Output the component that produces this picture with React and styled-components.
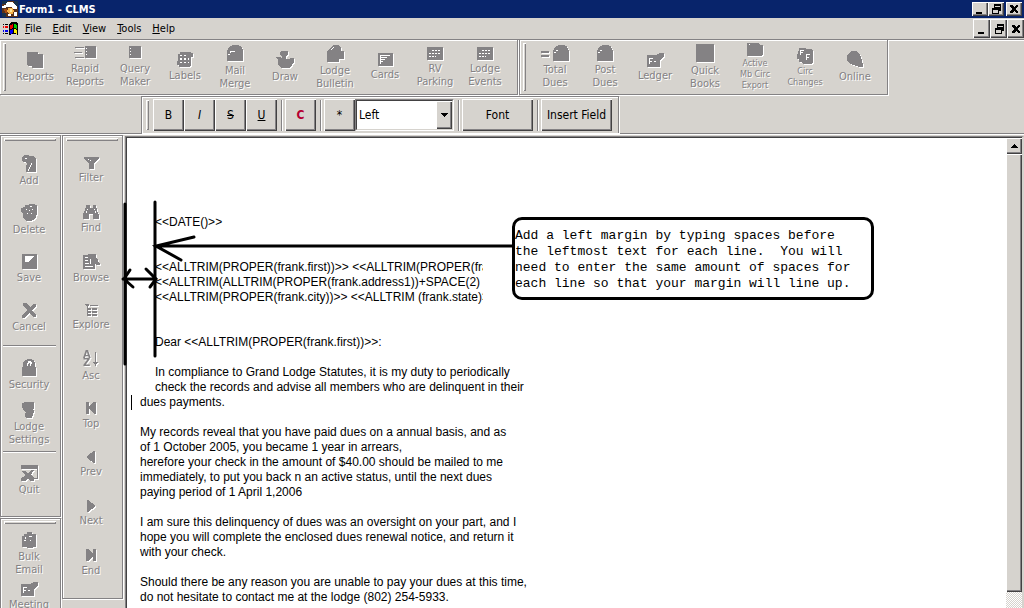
import React from 'react';
import styled, { createGlobalStyle, css } from 'styled-components';

const c = {
  face: '#d6d3ce',
  shade: '#848284',
  dark: '#424142',
  title: '#08246b',
};
const uiFont = '"DejaVu Sans Condensed", "DejaVu Sans", sans-serif';

const GlobalStyle = createGlobalStyle`
  * { box-sizing: border-box; }
  body { margin: 0; background: ${c.face}; font: 11px/13px ${uiFont}; color: #000; }
  button, select { font: inherit; color: inherit; margin: 0; padding: 0; border: 0; border-radius: 0; background: none; }
`;

const raised = css`
  background: ${c.face};
  box-shadow: inset 1px 1px #fff, inset -1px -1px ${c.dark}, inset -2px -2px ${c.shade};
`;

const Window = styled.div`
  display: flex;
  flex-direction: column;
  height: 100vh;
  overflow: hidden;
`;

const TitleBar = styled.header`
  display: flex;
  align-items: center;
  flex: none;
  height: 18px;
  padding: 0 2px;
  gap: 1px;
  background: ${c.title};
  color: #fff;
`;
const Title = styled.h1`
  flex: 1;
  margin: 0;
  padding-top: 2px;
  font: bold 11px/16px ${uiFont};
`;
const MenuBar = styled.nav`
  display: flex;
  align-items: center;
  flex: none;
  height: 21px;
  padding-left: 3px;
`;
const Menus = styled.div`
  display: flex;
  flex: 1;
  gap: 11px;
  padding-left: 6px;
`;
const MenuItem = styled.button`
  line-height: 18px;
`;
const WindowControls = styled.div`
  display: flex;
  margin-top: ${(p) => (p.$large ? '0' : '-1px')};
`;
const WindowButton = styled.button`
  ${raised}
  display: grid;
  place-items: center;
  width: ${(p) => (p.$large ? 17 : 16)}px;
  height: ${(p) => (p.$large ? 19 : 14)}px;
  margin-left: ${(p) => (p.$apart ? 2 : 0)}px;
`;

const Rebar = styled.div`
  position: relative;
  display: flex;
  flex-direction: column;
  flex: none;
  gap: 1px;
  border: solid ${c.shade};
  border-width: 1px 0;
  box-shadow: 0 1px #fff, inset 0 1px #fff;
`;
const RebarRow = styled.div`
  display: flex;
  gap: 1px;
  padding-left: ${(p) => p.$indent || 0}px;
`;
const Band = styled.div`
  display: flex;
  align-items: center;
  height: ${(p) => (p.$lower ? 37 : 55)}px;
  padding: ${(p) => (p.$lower ? '0 6px 0 4px' : '0 7px 0 3px')};
  border: solid ${c.shade};
  border-width: ${(p) => (p.$lower ? '1px 1px 0' : '0 1px 1px')};
  ${(p) => p.$flush && 'border-left: 0;'}
  box-shadow: inset 1px 1px #fff, 1px 1px #fff;
`;
const Grip = styled.div`
  flex: none;
  ${(p) =>
    p.$across
      ? 'height: 3px; margin: 0 1px 5px 3px;'
      : 'width: 3px; align-self: stretch; margin: 3px 4px 3px 0;'}
  box-shadow: inset 1px 1px #fff, inset -1px -1px ${c.shade};
`;
const Tool = styled.button`
  display: flex;
  flex-direction: column;
  align-items: center;
  justify-content: center;
  flex: none;
  gap: 2px;
  width: ${(p) => (p.$side ? 'auto' : '50px')};
  height: 49px;
  font-size: ${(p) => (p.$small ? 9 : 11)}px;
  line-height: ${(p) => (p.$small ? 11 : 13)}px;
  color: ${c.shade};
  text-shadow: 1px 1px #fff;
  white-space: pre;
`;
const Glyph = styled.svg`
  flex: none;
  overflow: visible;
  fill: ${c.shade};
  filter: drop-shadow(1px 1px 0 #fff);
  shape-rendering: crispEdges;
`;
const ToolLabel = styled.span`
  display: block;
  min-height: ${(p) => (p.$tall ? 26 : 13)}px;
  text-align: center;
`;

const FormatButton = styled.button`
  ${raised}
  width: ${(p) => p.$width || 31}px;
  height: 32px;
  font-size: 12px;
  color: ${(p) => p.$color || '#000'};
  font-weight: ${(p) => (p.$bold ? 'bold' : 'normal')};
  font-style: ${(p) => (p.$italic ? 'italic' : 'normal')};
  text-decoration: ${(p) => p.$line || 'none'};
`;
const Divider = styled.div`
  width: 2px;
  height: 31px;
  margin: 0 2px 0 4px;
  border-left: 1px solid ${c.shade};
  border-right: 1px solid #fff;
`;
const SelectFrame = styled.label`
  position: relative;
  display: block;
  width: 99px;
  height: 32px;
  border: 1px solid;
  border-color: ${c.shade} #fff #fff ${c.shade};
`;
const Select = styled.select`
  appearance: none;
  width: 100%;
  height: 100%;
  padding-left: 2px;
  font-size: 12px;
  background: #fff;
  border: 1px solid;
  border-color: ${c.dark} ${c.face} ${c.face} ${c.dark};
`;
const SelectArrow = styled.span`
  ${raised}
  position: absolute;
  top: 1px;
  right: 1px;
  bottom: 1px;
  width: 16px;
  display: grid;
  place-items: center;
  pointer-events: none;
`;

const Workspace = styled.div`
  display: flex;
  flex: 1;
  min-height: 0;
  padding-top: 1px;
`;
const SideColumn = styled.aside`
  display: flex;
  flex-direction: column;
  flex: none;
  gap: 1px;
  width: 61px;
  margin-right: ${(p) => p.$gap}px;
`;
const SideBand = styled.div`
  display: flex;
  flex-direction: column;
  flex: none;
  padding: 2px 3px 11px 0;
  border: 1px solid ${c.shade};
  box-shadow: inset 1px 1px #fff, 1px 1px #fff;
`;
const SideRule = styled.hr`
  width: 53px;
  height: 2px;
  margin: 3px auto;
  border: 0;
  border-top: 1px solid ${c.shade};
  border-bottom: 1px solid #fff;
`;

const Editor = styled.main`
  position: relative;
  display: flex;
  flex: 1;
  min-width: 0;
  margin-top: 1px;
  background: #fff;
  border: solid;
  border-width: 1px 2px 0 1px;
  border-color: ${c.shade} ${c.face} ${c.shade} ${c.shade};
`;
const Page = styled.article`
  flex: 1;
  min-width: 0;
  overflow: hidden;
  padding: 77px 0 0 13px;
  border: solid ${c.dark};
  border-width: 1px 0 0 1px;
  font: 12px/15px "Liberation Sans", Arial, sans-serif;
  white-space: pre;
`;
const Paragraph = styled.p`
  margin: 0 0 ${(p) => (p.$after === undefined ? 15 : p.$after)}px;
  padding-left: ${(p) => (p.$indent ? 15 : 0)}px;
`;
const MergeFields = styled(Paragraph)`
  width: 343px;
  overflow: hidden;
`;
const Caret = styled.span`
  position: absolute;
  width: 1px;
  height: 15px;
  margin-left: -9px;
  background: #000;
`;

const ScrollBar = styled.div`
  display: flex;
  flex-direction: column;
  flex: none;
  width: 16px;
  border-top: 1px solid ${c.dark};
  background: repeating-conic-gradient(${c.face} 0 25%, #fff 0 50%) 0 0 / 2px 2px;
`;
const ScrollButton = styled.button`
  ${raised}
  display: grid;
  place-items: center;
  height: 16px;
`;
const ScrollThumb = styled.div`
  ${raised}
  flex: 1;
  margin-bottom: 16px;
`;

const Markup = styled.svg`
  position: absolute;
  left: 0;
  top: 0;
  overflow: visible;
  pointer-events: none;
  fill: none;
  stroke: #000;
  stroke-width: 3;
  stroke-linecap: round;
`;
const Callout = styled.div`
  position: absolute;
  left: 386px;
  top: 80px;
  padding: 8px 12px 5px 0;
  border: 3px solid #000;
  border-radius: 10px;
  background: #fff;
  font: 13px/16px "Liberation Mono", "Courier New", monospace;
  white-space: pre;
  min-width: 362px;
`;

/* Each icon: size, silhouette and the light details cut into it. */
const icons = {
  reports: { w: 16, h: 16, d: 'M0 0h11v2h5v14H5v-2H1v-1H0z' },
  rapid: { w: 22, h: 14, d: 'M1 1h9v1H1zM0 6h8v1H0zM1 11h9v1H1zM11 0h11v12H11z', lit: 'M12 2h1v1h-1zM12 5h1v1h-1zM12 8h1v1h-1z' },
  query: { w: 12, h: 14, d: 'M0 0h12v12H0z', lit: 'M1 2h1v1H1zM1 5h1v1H1zM1 8h1v1H1z' },
  labels: { w: 16, h: 15, d: 'M1 2h2V0h11v1h2v4h-2v9h-1v1H2v-2H0V9h1z', lit: 'M3 3h2v1H3zM7 3h2v1H7zM3 6h2v2H3zM7 6h2v2H7zM3 10h2v1H3zM7 10h2v1H7zM11 6h1v2h-1zM11 10h1v1h-1z' },
  mail: { w: 16, h: 17, d: 'M5 0h7v1h2v1h1v2h1v12H0V5h1V3h1V2h1V1h2z', lit: 'M3 6h5v1H3zM3 7h1v1H3zM1 9h2v1H1z' },
  draw: { w: 18, h: 17, d: 'M5 0h7v4l-2 1v3h3l2-1h3v4l-2 3-3 3H5l-3-3V9L0 7V6h4l2 1V5L4 4V1z' },
  bulletin: { w: 17, h: 17, d: 'M3 3l4-3h4l3 3v3h3v8h-5v3H0V6h1z', lit: 'M4 4l3-3v1L5 5H4z' },
  cards: { w: 15, h: 13, d: 'M0 0h15v13H0z', lit: 'M2 2h10v1H2zM2 4h7v1H2zM2 6h5v1H2zM2 8h3v1H2zM2 2h1v9H2z' },
  calendar: { w: 16, h: 13, d: 'M0 0h16v13H0z', lit: 'M5 3h2v1H5zM8 3h2v1H8zM11 3h2v1h-2zM2 6h2v1H2zM5 6h2v1H5zM8 6h2v1H8zM11 6h2v1h-2zM2 9h2v1H2zM5 9h2v1H5zM8 9h1v1H8z' },
  total: { w: 28, h: 16, d: 'M0 6h8v2H0zM0 10h8v2H0zM17 0h7v1h2v2h1v2h1v11H12V5h1V3h1V2h1V1h2z', lit: 'M15 5h2v1h-2zM13 7h2v1h-2z' },
  post: { w: 16, h: 16, d: 'M5 0h7v1h2v2h1v2h1v11H0V5h1V3h1V2h1V1h2z', lit: 'M3 5h2v1H3zM1 7h2v1H1z' },
  ledger: { w: 17, h: 14, d: 'M0 2h9l4-2h4v3l-4 4v7H0z', lit: 'M2 5h4v1H3v2h2v1H3v2H2zM7 8h2v1H7z' },
  books: { w: 18, h: 18, d: 'M0 0h18v18H0z' },
  active: { w: 17, h: 13, d: 'M0 0h12l1 2h3v9l-2 2H0z', lit: 'M2 1h1v1H2z' },
  circ: { w: 17, h: 17, d: 'M2 1h6l1 1h6l1 2v12l-2 1H6l-1-2H2v-3H0V7h1z', lit: 'M3 3h4v1H4v1h2v1H4v2H3zM9 7h4v1h-3v2h2v1h-2v2H9z' },
  online: { w: 17, h: 17, d: 'M4 0h5l3 2 2 4 1 4 1 3v3h-4l-3-1-3-1-4-2-2-3V5l2-3z' },
  add: { w: 15, h: 17, d: 'M2 0h4l2 1h4l1 2h1v14H4v-5l1-3-1-2H2L0 6V2z', lit: 'M9 8h1v2H9zM8 10h1v2H8zM7 12h1v2H7zM6 14h1v2H6zM3 3h2v1H3z' },
  trash: { w: 17, h: 17, d: 'M4 1h4V0h6v1h2v9l-1 1v2l-3 3-3 1H6l-4-3V9H1L0 6V4h2V3h2z', lit: 'M9 2h2v1H9zM5 5h1v1H5zM8 6h1v1H8zM11 5h1v1h-1zM6 9h1v1H6zM10 9h1v1h-1z' },
  save: { w: 15, h: 15, d: 'M0 0h15v15H0z', lit: 'M3 2h9v1h-1v1h-1v1H9v1H8v1H7v1H3z' },
  cancel: { w: 15, h: 15, d: 'M1 0h3l4 4 4-3h2v2l-4 4 4 5v2h-2l-5-4-4 5H0v-3l5-5-4-5z' },
  lock: { w: 15, h: 17, d: 'M5 0h5v1h2v2h1v5h1v9H0V8h1V3h1V2h1V1h2z', lit: 'M6 2h3v1h1v2H9v2H8V4H7v1H6v2H5V4h1z' },
  settings: { w: 14, h: 16, d: 'M0 1l3-1h9v6l-1 1 1 2-2 7H4l-1-3 1-3-2-1-2-4z' },
  quit: { w: 17, h: 16, d: 'M0 0h17v14h-4v-1h3V4H1v9h3l-1 3H0v-3h1l3-3-3-4h3l3 3 3-4h3l-3 5 3 3v3H9l-2-3-3 3H2z' },
  bulk: { w: 15, h: 16, d: 'M5 0h5v2h4v13h-3v1H5v-1H0V4h2V2h3z', lit: 'M7 4h3v1H7zM3 5h1v2H3zM2 8h2v1H2zM8 8h1v1H8z' },
  filter: { w: 15, h: 12, d: 'M0 0h15v2h-1l-4 5v5H5V7L1 3V2H0z', lit: 'M4 2h1v1H4zM6 3h1v1H6z' },
  find: { w: 16, h: 14, d: 'M3 0h4v3h3V0h3v3l1 1v2l2 4v4h-6V9H6v5H0V9l2-4V3h1z', lit: 'M4 4h1v1H4zM3 6h1v2H3zM11 4h1v1h-1zM12 6h1v2h-1z' },
  browse: { w: 17, h: 15, d: 'M0 1h5V0h8v4l2 2v2l2 1v2h-3l-2-1v5H0z', lit: 'M2 3h3v1H2zM2 6h3v1H2zM2 9h4v1H2zM2 12h8v1H2zM7 5h1v5H7z' },
  explore: { w: 13, h: 12, d: 'M0 0h4v2H1zM5 1h8v1H5zM2 2h1v10H2zM3 4h3v2H3zM7 4h5v2H7zM3 7h3v2H3zM7 7h5v2H7zM3 10h3v2H3zM7 10h5v2H7z' },
  asc: {
    w: 16,
    h: 16,
    d: 'M12 1h1v10h2v1h-1v1h-1v2h-1v-2h-1v-1h-1v-1h2z',
    letters: [['A', 7], ['Z', 15]],
  },
  top: { w: 11, h: 14, d: 'M0 1h3v12H0zM9 1h1v12H8L3 8V6l4-5z' },
  prev: { w: 9, h: 12, d: 'M7 0h1v12H7L0 7V5z' },
  next: { w: 9, h: 12, d: 'M0 0h1l7 5v2l-7 5H0z' },
  end: { w: 11, h: 14, d: 'M7 1h3v12H7zM0 1h2l5 5v2l-4 5H0z' },
};

function Icon({ name }) {
  const { w, h, d, lit, letters } = icons[name];
  return (
    <Glyph width={w} height={h} viewBox={`0 0 ${w} ${h}`} aria-hidden="true">
      <path d={d} />
      {lit && <path d={lit} fill="#fff" />}
      {letters &&
        letters.map(([ch, y]) => (
          <text key={ch} x="0" y={y} fontFamily="DejaVu Sans" fontWeight="bold" fontSize="10" style={{ textShadow: 'none' }}>
            {ch}
          </text>
        ))}
    </Glyph>
  );
}

function ToolButton({ item, side }) {
  const [icon, label, opt] = item;
  return (
    <Tool disabled $side={side} $small={opt === 'small'}>
      <Icon name={icon} />
      <ToolLabel $tall={opt === 'tall'}>{label}</ToolLabel>
    </Tool>
  );
}

function Control({ kind }) {
  const paths = {
    minimize: <path d="M1 8h6v2H1z" />,
    restore: (
      <path
        fillRule="evenodd"
        d="M3 0h7v7H8V4H3zM4 2v1h5v3V2zM1 4h7v6H1zM2 6v3h5V6z"
      />
    ),
    close: <path d="M1 1h2l2 2 2-2h2v1L7 5l2 3v1H7L5 7 3 9H1V8l2-3-2-3z" />,
  };
  return (
    <svg width="10" height="10" viewBox="0 0 10 10" shapeRendering="crispEdges" aria-hidden="true">
      {paths[kind]}
    </svg>
  );
}

function Controls({ large }) {
  return (
    <WindowControls $large={large}>
      <WindowButton $large={large} aria-label="Minimize"><Control kind="minimize" /></WindowButton>
      <WindowButton $large={large} aria-label="Restore"><Control kind="restore" /></WindowButton>
      <WindowButton $large={large} $apart={!large} aria-label="Close"><Control kind="close" /></WindowButton>
    </WindowControls>
  );
}

function AppIcon() {
  return (
    <svg width="16" height="16" viewBox="0 0 16 16" shapeRendering="crispEdges" aria-hidden="true">
      <path fill="#5a3018" d="M0 0h16v16H0z" />
      <path fill="#18304a" d="M0 0h6v3H0zM12 0h4v6h-4zM0 12h4v4H0z" />
      <path fill="#fff" d="M5 1h5l2 2 3 3v2h-4L9 6H5L2 7H0V5l4-1z" />
      <path fill="#f7b24a" d="M6 7h5l1 3-1 3H8l-3-2z" />
      <path fill="#ffe79c" d="M8 8h2v3H8z" />
      <path fill="#fff" d="M12 11h3v4h-3zM6 13h3v2H6z" />
      <path fill="#a54a10" d="M2 8h3v4H3z" />
    </svg>
  );
}

function WindowsIcon() {
  return (
    <svg width="16" height="14" viewBox="0 0 16 14" shapeRendering="crispEdges" aria-hidden="true">
      <path d="M6 2l3-2h4l2 2v11l-2-1h-3l-4 1zM0 2h1v1H0zM2 2h3v1H2zM0 11h1v1H0zM2 11h3v1H2z" />
      <path fill="#e00" d="M7 3l3-1v4L7 7zM0 4h1v2H0zM2 4h3v2H2z" />
      <path fill="#0c0" d="M11 2l3 1v4l-3-1z" />
      <path fill="#00e" d="M7 8l3-1v4l-3 1zM0 8h1v2H0zM2 8h3v2H2z" />
      <path fill="#fe0" d="M11 7l3 1v4l-3-1z" />
    </svg>
  );
}

const Triangle = ({ up }) => (
  <svg width="7" height="4" viewBox="0 0 7 4" shapeRendering="crispEdges" aria-hidden="true">
    <path d={up ? 'M3 0h1v1h1v1h1v1h1v1H0V3h1V2h1V1h1z' : 'M0 0h7v1H6v1H5v1H4v1H3V3H2V2H1V1H0z'} />
  </svg>
);

const mainTools = [
  ['reports', 'Reports'],
  ['rapid', 'Rapid\nReports'],
  ['query', 'Query\nMaker'],
  ['labels', 'Labels'],
  ['mail', 'Mail\nMerge'],
  ['draw', 'Draw'],
  ['bulletin', 'Lodge\nBulletin'],
  ['cards', 'Cards'],
  ['calendar', 'RV\nParking'],
  ['calendar', 'Lodge\nEvents'],
];
const duesTools = [
  ['total', 'Total\nDues'],
  ['post', 'Post\nDues'],
  ['ledger', 'Ledger'],
  ['books', 'Quick\nBooks'],
  ['active', 'Active\nMb Circ\nExport', 'small'],
  ['circ', 'Circ\nChanges', 'small'],
  ['online', 'Online'],
];
const recordTools = [
  [['add', 'Add'], ['trash', 'Delete'], ['save', 'Save'], ['cancel', 'Cancel']],
  [['lock', 'Security'], ['settings', 'Lodge\nSettings']],
  [['quit', 'Quit']],
];
const messageTools = [['bulk', 'Bulk\nEmail'], ['ledger', 'Meeting', 'tall']];
const browseTools = [
  ['filter', 'Filter'],
  ['find', 'Find'],
  ['browse', 'Browse'],
  ['explore', 'Explore'],
  ['asc', 'Asc'],
  ['top', 'Top'],
  ['prev', 'Prev'],
  ['next', 'Next'],
  ['end', 'End'],
];

const renderTools = (items, side) =>
  items.map((item) => <ToolButton key={item[1]} item={item} side={side} />);

export default function App() {
  return (
    <Window>
      <GlobalStyle />
      <TitleBar>
        <AppIcon />
        <Title>Form1 - CLMS</Title>
        <Controls />
      </TitleBar>
      <MenuBar>
        <WindowsIcon />
        <Menus>
          {['File', 'Edit', 'View', 'Tools', 'Help'].map((m) => (
            <MenuItem key={m}><u>{m[0]}</u>{m.slice(1)}</MenuItem>
          ))}
        </Menus>
        <Controls large />
      </MenuBar>

      <Rebar>
        <RebarRow>
          <Band $flush>
            <Grip />
            {renderTools(mainTools)}
          </Band>
          <Band>
            <Grip />
            {renderTools(duesTools)}
          </Band>
        </RebarRow>
        <RebarRow $indent={141}>
          <Band $lower>
            <Grip />
            <FormatButton>B</FormatButton>
            <FormatButton $italic>I</FormatButton>
            <FormatButton $line="line-through">S</FormatButton>
            <FormatButton $line="underline">U</FormatButton>
            <Divider />
            <FormatButton $bold $color="#b50031">C</FormatButton>
            <Divider />
            <FormatButton>*</FormatButton>
            <SelectFrame>
              <Select aria-label="Alignment" defaultValue="Left">
                <option>Left</option>
              </Select>
              <SelectArrow><Triangle /></SelectArrow>
            </SelectFrame>
            <Divider />
            <FormatButton $width={71}>Font</FormatButton>
            <Divider />
            <FormatButton $width={71}>Insert Field</FormatButton>
          </Band>
        </RebarRow>
      </Rebar>

      <Workspace>
        <SideColumn $gap={1}>
          <SideBand>
            <Grip $across />
            {recordTools.map((group, i) => (
              <React.Fragment key={i}>
                {i > 0 && <SideRule />}
                {renderTools(group, true)}
              </React.Fragment>
            ))}
          </SideBand>
          <SideBand>
            <Grip $across />
            {renderTools(messageTools, true)}
          </SideBand>
        </SideColumn>
        <SideColumn $gap={2}>
          <SideBand>
            <Grip $across />
            {renderTools(browseTools, true)}
          </SideBand>
        </SideColumn>

        <Editor>
          <Page>
            <Paragraph $indent $after={30}>{'<<DATE()>>'}</Paragraph>
            <MergeFields $indent $after={30}>
              {'<<ALLTRIM(PROPER(frank.first))>> <<ALLTRIM(PROPER(fra\n' +
                '<<ALLTRIM(ALLTRIM(PROPER(frank.address1))+SPACE(2)\n' +
                '<<ALLTRIM(PROPER(frank.city))>> <<ALLTRIM (frank.state)>'}
            </MergeFields>
            <Paragraph $indent>{'Dear <<ALLTRIM(PROPER(frank.first))>>:'}</Paragraph>
            <Paragraph $indent $after={0}>
              {'In compliance to Grand Lodge Statutes, it is my duty to periodically\n' +
                'check the records and advise all members who are delinquent in their'}
            </Paragraph>
            <Paragraph><Caret />dues payments.</Paragraph>
            <Paragraph>
              {'My records reveal that you have paid dues on a annual basis, and as\n' +
                'of 1 October 2005, you became 1 year in arrears,\n' +
                'herefore your check in the amount of $40.00 should be mailed to me\n' +
                'immediately, to put you back n an active status, until the next dues\n' +
                'paying period of 1 April 1,2006'}
            </Paragraph>
            <Paragraph>
              {'I am sure this delinquency of dues was an oversight on your part, and I\n' +
                'hope you will complete the enclosed dues renewal notice, and return it\n' +
                'with your check.'}
            </Paragraph>
            <Paragraph>
              {'Should there be any reason you are unable to pay your dues at this time,\n' +
                'do not hesitate to contact me at the lodge (802) 254-5933.'}
            </Paragraph>
          </Page>
          <ScrollBar>
            <ScrollButton aria-label="Scroll up"><Triangle up /></ScrollButton>
            <ScrollThumb />
          </ScrollBar>

          <Markup width="760" height="240" viewBox="0 0 760 240" aria-hidden="true">
            <path d="M-1 67V227M29 65V219" />
            <path d="M29 109H388M68 100L30 109 55 123" />
            <path d="M-3 142H30M4 133L-2 142 7 150M20 132L30 142 24 150" />
          </Markup>
          <Callout>
            {'Add a left margin by typing spaces before\n' +
              'the leftmost text for each line.  You will\n' +
              'need to enter the same amount of spaces for\n' +
              'each line so that your margin will line up.'}
          </Callout>
        </Editor>
      </Workspace>
    </Window>
  );
}
